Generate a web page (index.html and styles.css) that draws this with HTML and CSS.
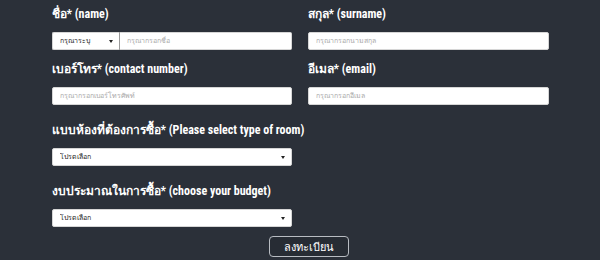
FILE: index.html
```html
<!DOCTYPE html>
<html lang="th">
<head>
  <meta charset="UTF-8" />
  <meta name="viewport" content="width=device-width, initial-scale=1.0" />
  <title>ลงทะเบียน</title>
  <link rel="stylesheet" href="styles.css">
</head>
<body>
  <form class="register-form">
    <div class="grid">
      <div class="field">
        <label class="field-label">ชื่อ* (name)</label>
        <div class="name-row">
          <div class="select-wrap prefix">
            <select class="control">
              <option>กรุณาระบุ</option>
            </select>
          </div>
          <input class="control name-input" type="text" placeholder="กรุณากรอกชื่อ">
        </div>
      </div>
      <div class="field">
        <label class="field-label">สกุล* (surname)</label>
        <input class="control" type="text" placeholder="กรุณากรอกนามสกุล">
      </div>
      <div class="field">
        <label class="field-label">เบอร์โทร* (contact number)</label>
        <input class="control" type="text" placeholder="กรุณากรอกเบอร์โทรศัพท์">
      </div>
      <div class="field">
        <label class="field-label">อีเมล* (email)</label>
        <input class="control" type="text" placeholder="กรุณากรอกอีเมล">
      </div>
    </div>

    <div class="field wide room">
      <label class="field-label">แบบห้องที่ต้องการซื้อ* (Please select type of room)</label>
      <div class="select-wrap">
        <select class="control">
          <option>โปรดเลือก</option>
        </select>
      </div>
    </div>

    <div class="field wide budget">
      <label class="field-label">งบประมาณในการซื้อ* (choose your budget)</label>
      <div class="select-wrap">
        <select class="control">
          <option>โปรดเลือก</option>
        </select>
      </div>
    </div>

    <div class="actions">
      <button type="submit" class="submit-btn">ลงทะเบียน</button>
    </div>
  </form>
</body>
</html>
```

FILE: styles.css
```css
/* dark registration form */
body {
  margin: 0;
  background: #2b3039;
  color: #fff;
  font-family: "Roboto Condensed", "Liberation Sans", sans-serif;
}

.register-form {
  width: 497px;
  margin: 0 auto;
  padding-top: 4px;
}

.grid {
  display: grid;
  grid-template-columns: 240px 241px;
  column-gap: 16px;
  row-gap: 9px;
}

.field-label {
  display: block;
  font-size: 12px;
  font-weight: 700;
  line-height: 20px;
  margin-bottom: 8px;
  white-space: nowrap;
}

.control {
  display: block;
  box-sizing: border-box;
  width: 100%;
  height: 18px;
  padding: 0 7px;
  border: 1px solid #d6d6d6;
  border-radius: 2px;
  background: #fff;
  color: #222;
  font-family: inherit;
  font-size: 7px;
  outline: none;
}

.control::placeholder {
  color: #a9a9a9;
}

select.control {
  -webkit-appearance: none;
  appearance: none;
}

.select-wrap {
  position: relative;
}

.select-wrap::after {
  content: "";
  position: absolute;
  right: 7px;
  top: 8px;
  border-left: 2px solid transparent;
  border-right: 2px solid transparent;
  border-top: 3px solid #222;
}

.name-row {
  display: flex;
}

.prefix {
  width: 68px;
  flex: none;
}

.prefix .control {
  border-radius: 2px 0 0 2px;
  border-right-color: #9a9a9a;
}

.name-input {
  border-radius: 0 2px 2px 0;
  border-left: none;
}

.wide {
  width: 240px;
}

.room,
.budget {
  margin-top: 15px;
}

.actions {
  display: flex;
  justify-content: center;
  padding-left: 18px;
  margin-top: 9px;
}

.submit-btn {
  width: 80px;
  height: 21px;
  padding: 0;
  border: 1px solid #b8bcc2;
  border-radius: 4px;
  background: #272c34;
  color: #fff;
  font-family: inherit;
  font-size: 11px;
  cursor: pointer;
}
```
